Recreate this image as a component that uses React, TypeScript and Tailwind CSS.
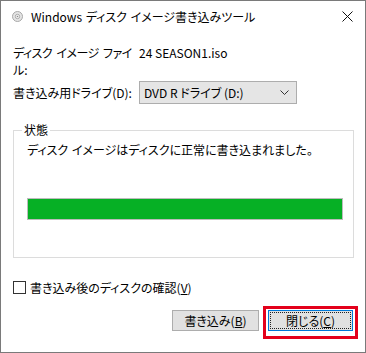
import React from "react";

const font = {
  fontFamily: '"Noto Sans CJK JP", "Noto Sans", sans-serif',
};

function DiscIcon() {
  return (
    <svg width="11" height="11" viewBox="0 0 11 11" className="shrink-0">
      <circle cx="5.5" cy="5.5" r="5" fill="#e4e4e4" stroke="#a8a8a8" strokeWidth="1" />
      <circle cx="5.5" cy="5.5" r="2.2" fill="#f7f7f7" stroke="#9a9a9a" strokeWidth="0.8" />
      <circle cx="5.5" cy="5.5" r="0.8" fill="#8a8a8a" />
    </svg>
  );
}

export default function App() {
  return (
    <div
      style={font}
      className="relative flex h-[353px] w-[366px] flex-col border border-[#7a7a7a] bg-white text-[12px] leading-[15px] text-black [font-feature-settings:'palt']"
    >
      {/* Title bar */}
      <div className="flex h-[31px] items-center pl-[11px] pr-[10px]">
        <DiscIcon />
        <span className="ml-[8px] whitespace-nowrap [word-spacing:1px]">
          Windows ディスク イメージ書き込みツール
        </span>
        <svg width="11" height="11" viewBox="0 0 11 11" className="ml-auto mr-[2px]">
          <path d="M0.5 0.5 L10.5 10.5 M10.5 0.5 L0.5 10.5" stroke="#111" strokeWidth="1" />
        </svg>
      </div>

      <div className="flex flex-col px-[12px] pt-[12px]">
        {/* Image file */}
        <div className="flex">
          <div className="w-[126px] leading-[17px]">
            <div className="whitespace-nowrap tracking-[-0.5px] [word-spacing:2px]">
              ディスク イメージ ファイ
            </div>
            <div>ル:</div>
          </div>
          <div className="leading-[17px]">24 SEASON1.iso</div>
        </div>

        {/* Drive */}
        <div className="mt-[3px] flex items-center">
          <div className="w-[126px]">書き込み用ドライブ(D):</div>
          <div className="flex h-[23px] w-[158px] items-center border border-[#adadad] bg-[#e5e5e5] pl-[4px] pr-[7px]">
            <span>DVD R ドライブ (D:)</span>
            <svg width="9" height="5" viewBox="0 0 9 5" className="ml-auto">
              <path d="M0.5 0.5 L4.5 4.5 L8.5 0.5" stroke="#333" strokeWidth="1" fill="none" />
            </svg>
          </div>
        </div>

        {/* Status group */}
        <div className="relative mt-[26px] h-[128px] w-[341px] border border-[#dcdcdc] px-[13px] pt-[11px]">
          <span className="absolute left-[8px] top-[-9px] bg-white px-[2px]">状態</span>
          <div className="whitespace-nowrap [word-spacing:1px]">
            ディスク イメージはディスクに正常に書き込まれました。
          </div>
          <div className="mt-[41px] h-[22px] w-[316px] border border-[#bcbcbc] bg-[#e6e6e6]">
            <div className="h-full w-full bg-[#06b025]" />
          </div>
        </div>

        {/* Verify checkbox */}
        <div className="mt-[22px] flex items-center">
          <div className="h-[13px] w-[13px] border border-[#333333] bg-white" />
          <span className="ml-[4px]">
            書き込み後のディスクの確認(<span className="underline">V</span>)
          </span>
        </div>

        {/* Buttons */}
        <div className="mt-[15px] flex justify-end">
          <button className="flex h-[21px] w-[87px] items-center justify-center border border-[#adadad] bg-[#e1e1e1]">
            書き込み(<span className="underline">B</span>)
          </button>
          <button className="relative ml-[9px] flex h-[21px] w-[85px] items-center justify-center border border-[#0078d7] bg-[#e1e1e1] p-[1px]">
            <span className="flex h-full w-full items-center justify-center border border-dotted border-[#222]">
              閉じる(<span className="underline">C</span>)
            </span>
            <span className="pointer-events-none absolute left-[-6px] right-[-6px] top-[-5px] bottom-[-9px] border-[3px] border-[#e3001b]" />
          </button>
        </div>
      </div>
    </div>
  );
}
